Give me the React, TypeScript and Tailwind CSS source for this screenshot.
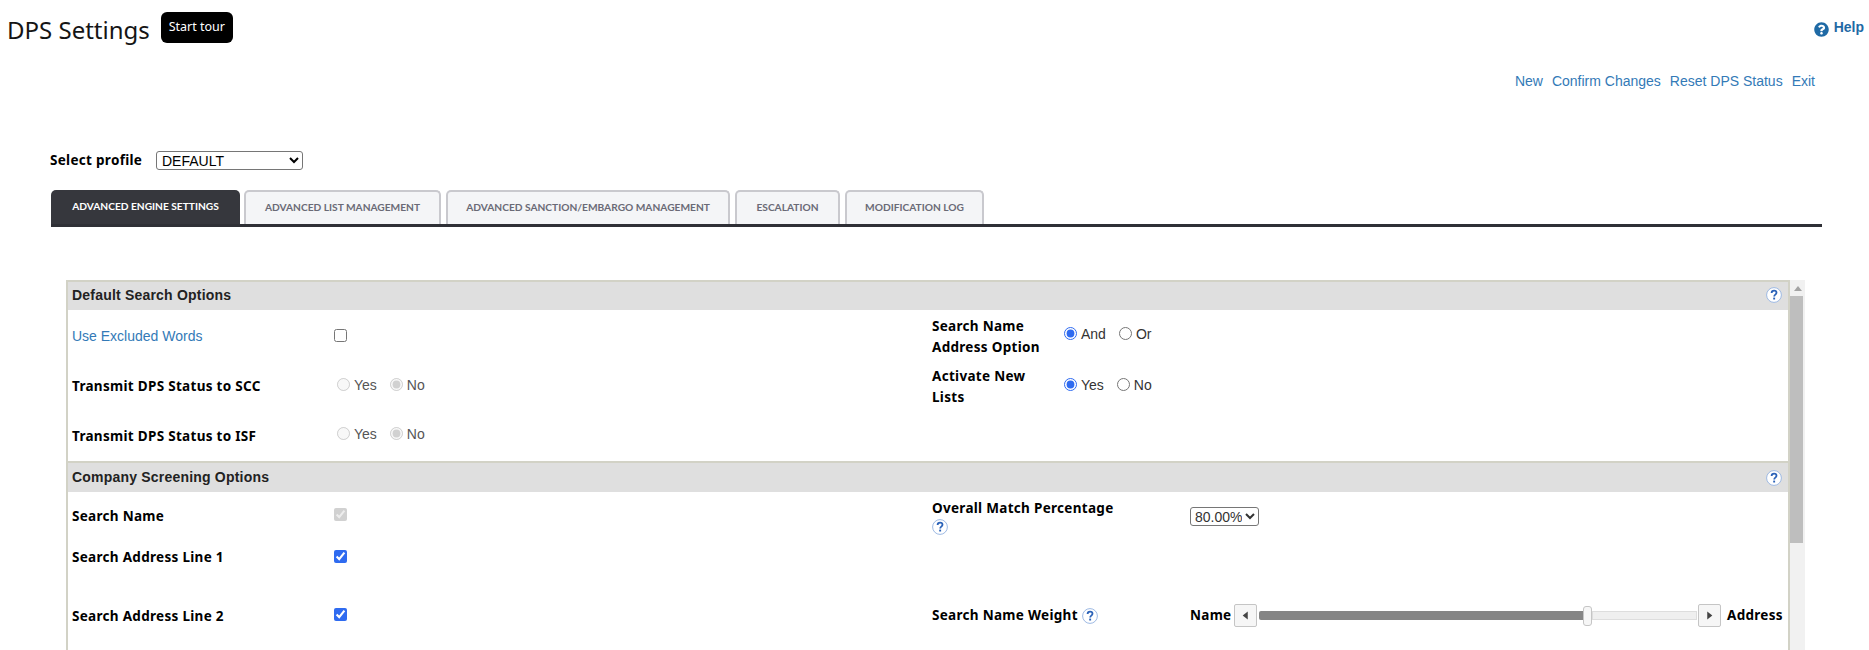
import React from "react";
import { FaQuestionCircle } from "react-icons/fa";

const bold = "font-['Noto_Sans',sans-serif] font-bold text-[13.5px] text-black tracking-[0.3px]";
const arial = "font-['Liberation_Sans',Arial,sans-serif] text-[14px]";

function Q() {
  return (
    <svg width="16" height="16" viewBox="0 0 16 16" className="shrink-0 block">
      <circle cx="8" cy="8" r="7.4" fill="#fff" stroke="#9db9e3" strokeWidth="1" />
      <path d="M5.6 6.1c0-1.5 1.1-2.4 2.5-2.4s2.4.8 2.4 2c0 1.9-2.3 1.9-2.3 3.7" fill="none" stroke="#2b62b8" strokeWidth="1.8" />
      <rect x="7.2" y="10.6" width="1.9" height="1.9" fill="#2b62b8" />
    </svg>
  );
}

function Radio({ label, checked, disabled, gap, name }: { label: string; checked?: boolean; disabled?: boolean; gap: string; name: string }) {
  return (
    <label className={`flex items-center ${gap} ${arial} text-[#333]`}>
      <input type="radio" name={name} defaultChecked={checked} disabled={disabled} className="m-0 w-[13px] h-[13px] mr-[4px] -translate-y-[1px] accent-[#2f6bf0]" />
      <span className={disabled ? "text-[#555]" : ""}>{label}</span>
    </label>
  );
}

function Header({ title, h }: { title: string; h: string }) {
  return (
    <div className={`${h} bg-[#dfdfdf] border-t-2 border-[#d2d2c6] flex items-center justify-between pl-[4px] pr-[6px]`}>
      <span className="font-['Liberation_Sans',Arial,sans-serif] font-bold text-[14px] text-[#222] tracking-[0.2px]">{title}</span>
      <Q />
    </div>
  );
}

function Box({ checked, disabled }: { checked?: boolean; disabled?: boolean }) {
  return <input type="checkbox" defaultChecked={checked} disabled={disabled} className="m-0 w-[13px] h-[13px] accent-[#2f6bf0] block" />;
}

function Row({ h, left, control, right, rightClass = "" }: { h: string; left: React.ReactNode; control: React.ReactNode; right?: React.ReactNode; rightClass?: string }) {
  return (
    <div className={`${h} flex items-center pl-[4px]`}>
      <div className="w-[262px] shrink-0">{left}</div>
      <div className="w-[598px] shrink-0 flex items-center">{control}</div>
      <div className={`flex-1 min-w-0 flex items-center ${rightClass}`}>{right}</div>
    </div>
  );
}

const tabs = [
  { t: "ADVANCED ENGINE SETTINGS", w: "w-[189px] -mr-[1px]" },
  { t: "ADVANCED LIST MANAGEMENT", w: "w-[197px]" },
  { t: "ADVANCED SANCTION/EMBARGO MANAGEMENT", w: "w-[284px]" },
  { t: "ESCALATION", w: "w-[105px]" },
  { t: "MODIFICATION LOG", w: "w-[139px]" },
];

export default function App() {
  return (
    <div className="h-[650px] w-[1869px] overflow-hidden bg-white">
      <div className="flex justify-between pt-[12px] pl-[7px] pr-[5px] h-[42px]">
        <div className="flex items-start">
          <h1 className="font-['Noto_Sans',sans-serif] text-[24px] leading-[36px] text-[#151515]">DPS Settings</h1>
          <button className="ml-[11px] h-[31px] w-[72px] rounded-[6px] bg-black text-white text-[12.5px] font-['Noto_Sans',sans-serif]">Start tour</button>
        </div>
        <div className="flex items-center h-[30px] gap-[5px] text-[#1f6aa5]">
          <FaQuestionCircle size={15} className="mt-[4px]" />
          <span className="font-['Liberation_Sans',Arial,sans-serif] font-bold text-[14px]">Help</span>
        </div>
      </div>

      <div className={`mt-[29px] h-[20px] flex justify-end gap-[9px] pr-[54px] ${arial} leading-[20px] text-[#337ab7]`}>
        <a>New</a>
        <a>Confirm Changes</a>
        <a>Reset DPS Status</a>
        <a>Exit</a>
      </div>

      <div className="mt-[60px] ml-[50px] h-[19px] flex items-center">
        <span className={`${bold} w-[106px]`}>Select profile</span>
        <select className={`w-[147px] h-[19px] border border-[#767676] rounded-[3px] bg-white pl-[1px] ${arial} text-[13.3px] text-black`} defaultValue="DEFAULT">
          <option>DEFAULT</option>
        </select>
      </div>

      <div className="mt-[20px] ml-[51px] mr-[47px] h-[37px] border-b-[3px] border-[#2f3036] flex gap-[5px]">
        {tabs.map((x, i) => (
          <div
            key={x.t}
            className={`${x.w} h-[34px] rounded-t-[5px] flex items-center justify-center font-['Lato',sans-serif] font-bold text-[10.2px] ${
              i === 0 ? "bg-[#36373d] text-white" : "bg-[#f4f5f7] text-[#6a6a76] border-2 border-b-0 border-[#c9c9ce]"
            }`}
          >
            {x.t}
          </div>
        ))}
      </div>

      <div className="mt-[53px] ml-[66px] w-[1739px] flex h-[370px]">
        <div className="w-[1724px] border-l-2 border-r-2 border-[#d2d2c6]">
          <Header title="Default Search Options" h="h-[30px] pb-[2px]" />
          <Row
            h="h-[50px]"
            left={<span className={`${arial} text-[#337ab7]`}>Use Excluded Words</span>}
            control={<Box />}
            right={
              <>
                <span className={`${bold} w-[132px] leading-[21px] pt-[3px]`}>Search Name<br />Address Option</span>
                <div className="flex items-center -mt-[2px]">
                  <Radio name="a" label="And" checked gap="mr-[13px]" />
                  <Radio name="a" label="Or" gap="" />
                </div>
              </>
            }
          />
          <Row
            h="h-[51px]"
            left={<span className={`${bold} block pt-[2px]`}>Transmit DPS Status to SCC</span>}
            control={
              <div className="flex items-center ml-[3px]">
                <Radio name="b" label="Yes" disabled gap="mr-[13px]" />
                <Radio name="b" label="No" checked disabled gap="" />
              </div>
            }
            right={
              <>
                <span className={`${bold} w-[132px] leading-[21px] pt-[3px]`}>Activate New<br />Lists</span>
                <Radio name="c" label="Yes" checked gap="mr-[13px]" />
                <Radio name="c" label="No" gap="" />
              </>
            }
          />
          <Row
            h="h-[50px] pb-[3px]"
            left={<span className={bold}>Transmit DPS Status to ISF</span>}
            control={
              <div className="flex items-center ml-[3px]">
                <Radio name="d" label="Yes" disabled gap="mr-[13px]" />
                <Radio name="d" label="No" checked disabled gap="" />
              </div>
            }
          />
          <Header title="Company Screening Options" h="h-[31px]" />
          <Row
            h="h-[45px]"
            left={<span className={bold}>Search Name</span>}
            control={<Box checked disabled />}
            right={
              <>
                <div className="w-[258px] leading-[21px] pt-[3px]">
                  <div className={bold}>Overall Match Percentage</div>
                  <Q />
                </div>
                <select className={`w-[69px] h-[19px] mt-[3px] border border-[#767676] rounded-[3px] bg-white ${arial} text-[13.3px] text-[#333]`} defaultValue="80.00%">
                  <option>80.00%</option>
                </select>
              </>
            }
          />
          <Row h="h-[38px]" left={<span className={bold}>Search Address Line 1</span>} control={<Box checked />} />
          <Row
            h="h-[79px]"
            left={<span className={bold}>Search Address Line 2</span>}
            control={<Box checked />}
            rightClass="pt-[2px]"
            right={
              <>
                <div className="w-[258px] flex items-center gap-[4px]">
                  <span className={bold}>Search Name Weight</span>
                  <Q />
                </div>
                <span className={`${bold} w-[44px]`}>Name</span>
                <div className="w-[23px] h-[23px] border border-[#c5c5c5] rounded-[2px] bg-[#f6f6f6] flex items-center justify-center">
                  <svg width="7" height="9" viewBox="0 0 6 8"><path d="M5 0.5V7.5L0.5 4Z" fill="#444" /></svg>
                </div>
                <div className="w-[438px] ml-[2px] h-[9px] flex items-center">
                  <div className="w-[324px] h-[9px] rounded-l-[2px] bg-[#858585]" />
                  <div className="w-[9px] h-[20px] shrink-0 rounded-[3px] bg-[#f6f6f6] border border-[#c5c5c5]" />
                  <div className="flex-1 h-[9px] bg-[#efefef] border border-[#dddddd]" />
                </div>
                <div className="w-[23px] h-[23px] ml-[1px] border border-[#c5c5c5] rounded-[2px] bg-[#f6f6f6] flex items-center justify-center">
                  <svg width="7" height="9" viewBox="0 0 6 8"><path d="M1 0.5V7.5L5.5 4Z" fill="#444" /></svg>
                </div>
                <span className={`${bold} ml-[6px]`}>Address</span>
              </>
            }
          />
        </div>
        <div className="w-[15px] bg-[#f1f1f1] flex flex-col">
          <div className="h-[16px] flex items-center justify-center">
            <svg width="8" height="5" viewBox="0 0 8 5"><path d="M4 0L8 5H0Z" fill="#a3a3a3" /></svg>
          </div>
          <div className="h-[247px] w-[13px] bg-[#bebebe]" />
        </div>
      </div>
    </div>
  );
}
